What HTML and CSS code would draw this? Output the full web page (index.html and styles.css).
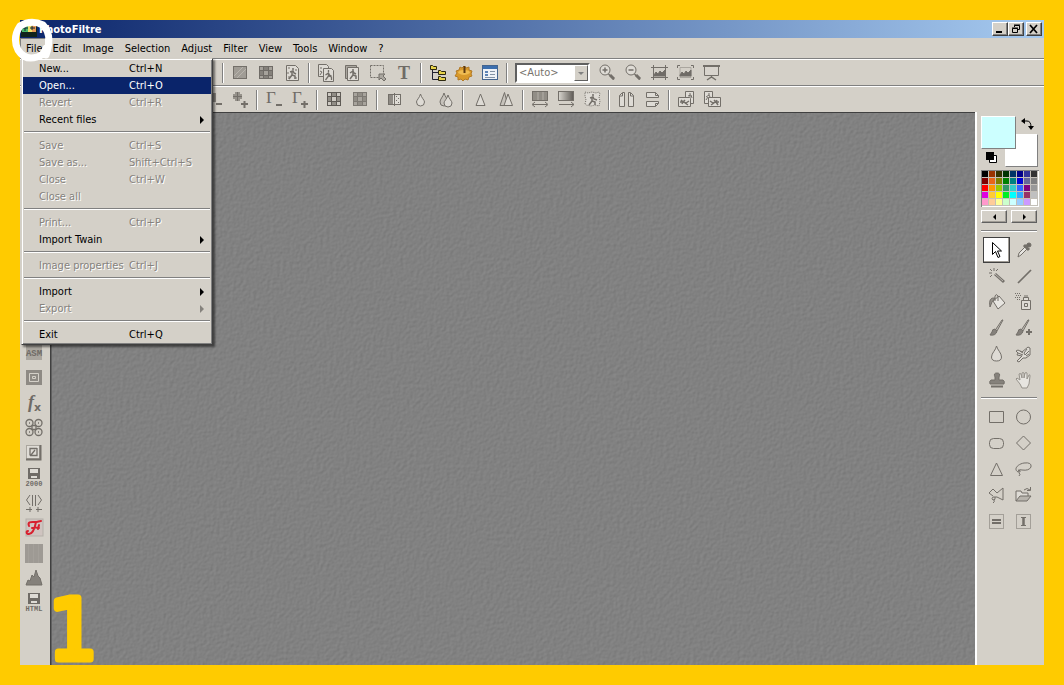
FILE: index.html
```html
<!DOCTYPE html>
<html lang="en">
<head>
<meta charset="utf-8">
<title>PhotoFiltre</title>
<link rel="stylesheet" href="styles.css">
</head>
<body>
<div class="window">
  <header class="titlebar">
    <svg class="app-icon" width="16" height="16" viewBox="0 0 16 16" aria-hidden="true"><rect width="16" height="16" fill="#10231c"/><path d="M1 3h6v8H1z" fill="#49b96d"/><path d="M7 3h4v8H7z" fill="#f0e06a"/><path d="M11 3h4v8h-4z" fill="#e99b58"/><path d="M2 7h5M4 5v5M9 7h5M11 5v4" stroke="#123" /></svg>
    <h1 class="title">PhotoFiltre</h1>
    <div class="win-controls">
      <button class="win-btn" aria-label="Minimize"><svg width="12" height="10"><path d="M2 8h6" stroke="#000" stroke-width="2"/></svg></button>
      <button class="win-btn" aria-label="Restore"><svg width="12" height="10" fill="none" stroke="#000"><path d="M4.500 3V1.500h5v4H8M4 1h6M2.500 4.500h5v4h-5zM2 4h6"/></svg></button>
      <button class="win-btn win-close" aria-label="Close"><svg width="12" height="10"><path d="M2 1l7 8M9 1L2 9" stroke="#000" stroke-width="1.700"/></svg></button>
    </div>
  </header>

  <nav class="menubar" aria-label="Main menu">
    <div class="menu-root">
      <button class="menu-title open" aria-expanded="true">File</button>
      <div class="dropdown" role="menu">
        <button class="item" role="menuitem"><span>New...</span><span>Ctrl+N</span></button>
        <button class="item selected" role="menuitem"><span>Open...</span><span>Ctrl+O</span></button>
        <button class="item" role="menuitem" disabled><span>Revert</span><span>Ctrl+R</span></button>
        <button class="item sub" role="menuitem"><span>Recent files</span></button>
        <hr class="menu-sep">
        <button class="item" role="menuitem" disabled><span>Save</span><span>Ctrl+S</span></button>
        <button class="item" role="menuitem" disabled><span>Save as...</span><span>Shift+Ctrl+S</span></button>
        <button class="item" role="menuitem" disabled><span>Close</span><span>Ctrl+W</span></button>
        <button class="item" role="menuitem" disabled><span>Close all</span></button>
        <hr class="menu-sep">
        <button class="item" role="menuitem" disabled><span>Print...</span><span>Ctrl+P</span></button>
        <button class="item sub" role="menuitem"><span>Import Twain</span></button>
        <hr class="menu-sep">
        <button class="item" role="menuitem" disabled><span>Image properties</span><span>Ctrl+J</span></button>
        <hr class="menu-sep">
        <button class="item sub" role="menuitem"><span>Import</span></button>
        <button class="item sub" role="menuitem" disabled><span>Export</span></button>
        <hr class="menu-sep">
        <button class="item" role="menuitem"><span>Exit</span><span>Ctrl+Q</span></button>
      </div>
    </div>
    <button class="menu-title">Edit</button>
    <button class="menu-title">Image</button>
    <button class="menu-title">Selection</button>
    <button class="menu-title">Adjust</button>
    <button class="menu-title">Filter</button>
    <button class="menu-title">View</button>
    <button class="menu-title">Tools</button>
    <button class="menu-title">Window</button>
    <button class="menu-title">?</button>
  </nav>

  <div class="toolbar main-tools" role="toolbar" aria-label="Standard">
    <i class="sep"></i>
    <button class="tool" aria-label="Grayscale"><svg class="ic" viewBox="0 0 20 20"><rect x="3.500" y="3.500" width="13" height="12" fill="#a09c95"/><path d="M4 13l9-9M7 15l9-9" stroke="#b8b4ad"/></svg></button>
    <button class="tool" aria-label="Indexed colors"><svg class="ic" viewBox="0 0 20 20"><rect x="3" y="3" width="14" height="13" fill="#6f6b66" stroke="none"/><path d="M4 4h3v3H4zM13 4h3v3h-3zM8 8h4v4H8zM4 13h3v2H4zM13 13h3v2h-3z" fill="#a6a29b" stroke="none"/><path d="M8 4h4v3H8zM4 8h3v4H4zM13 8h3v4h-3zM8 13h4v2H8z" fill="#85817b" stroke="none"/></svg></button>
    <button class="tool" aria-label="Transparency"><svg class="ic" viewBox="0 0 20 20"><path d="M4.500 2.500h9l3 3v12h-12z" fill="#dedbd5"/><path d="M6 4h2v2H6zM13 6h2v2h-2zM6 13h2v3H6zM13 14h2v2h-2zM5 9h2v2H5z" fill="#aaa69f" stroke="none"/><path d="M11 5v2M8 9l3-1 1 2 2 1M10 8v4l-3 4M10 12l3 1v3" stroke-width="1.500"/></svg></button>
    <i class="sep"></i>
    <button class="tool" aria-label="Duplicate"><svg class="ic" viewBox="0 0 20 20"><path d="M2.500 1.500h8l2 2v10h-10z" fill="#dedbd5"/><path d="M5 4v2M4 8l2 1-2 3"/><path d="M7.500 5.500h8l2 2v11h-10z" fill="#dedbd5"/><path d="M12.500 7v2M9.500 12l3-2 1 2 2 1M12.500 10v3l-3 4M12.500 13l3 1v3" stroke-width="1.300"/></svg></button>
    <button class="tool" aria-label="Paste as new"><svg class="ic" viewBox="0 0 20 20"><path d="M3.500 2.500h11v13h-11z" fill="#aaa69f"/><path d="M5.500 4.500h11v13h-11z" fill="#dedbd5"/><path d="M11 6v2M8 10l3-2 1 2 2 1M11 9v3l-3 4M11 12l3 1v3" stroke-width="1.500"/></svg></button>
    <button class="tool" aria-label="Show selection"><svg class="ic" viewBox="0 0 20 20"><rect x="2.500" y="2.500" width="13" height="12" stroke-dasharray="2 1"/><path d="M11 11h6l-2 2 3 3-2 2-3-3-2 2z" fill="#aaa69f"/></svg></button>
    <button class="tool" aria-label="Text"><svg class="ic" viewBox="0 0 20 20"><text x="10" y="16" text-anchor="middle" class="serif-glyph" font-size="18">T</text></svg></button>
    <i class="sep"></i>
    <button class="tool" aria-label="Image explorer"><svg class="ic" viewBox="0 0 20 20"><path d="M4.500 6v10.500H10M5 9.500h6" stroke="#223"/><path d="M2.500 2.500h2l1 1h3v3h-6zM10.500 7.500h2l1 1h4v3h-7zM10.500 13.500h2l1 1h4v3h-7z" fill="#e6d24a" stroke="#2c2810"/></svg></button>
    <button class="tool" aria-label="Automation"><svg class="ic" viewBox="0 0 20 20"><path d="M6 4l2 1 2-2 2 2 3-1v3l3 1-1 3 1 2-3 1-1 3-3-1-2 2-2-2-3 1v-3l-3-1 2-3-1-2 3-1z" fill="#d99a2b" stroke="#b37a26"/><path d="M4 10q0-3 6-3t6 3q-3 2-6 2t-6-2z" fill="#efbc52" stroke="none"/><path d="M10.500 3v7" stroke="#5d3a10" stroke-width="2"/></svg></button>
    <button class="tool" aria-label="Preferences"><svg class="ic" viewBox="0 0 20 20"><rect x="2.500" y="2.500" width="15" height="14" fill="#eef2f7" stroke="#44658f"/><path d="M3 3h14v3H3z" fill="#3c6faf" stroke="none"/><path d="M5 8h3v2H5zM5 11h3v2H5z" fill="#5c83b5" stroke="none"/><path d="M10 8.500h5M10 11.500h5M5 14.500h10" stroke="#8493a5"/></svg></button>
    <i class="sep"></i>
    <label class="zoom-select"><select aria-label="Zoom"><option>&lt;Auto&gt;</option></select><span class="drop" aria-hidden="true"></span></label>
    <button class="tool" aria-label="Zoom in"><svg class="ic" viewBox="0 0 20 20"><circle cx="8" cy="7" r="5" fill="#dedbd5"/><path d="M5.500 7h5M8 4.500v5M11.500 11l5.500 5.500" stroke-width="1.500"/><path d="M13 12l4 4" stroke-width="3"/></svg></button>
    <button class="tool" aria-label="Zoom out"><svg class="ic" viewBox="0 0 20 20"><circle cx="8" cy="7" r="5" fill="#dedbd5"/><path d="M5.500 7h5M11.500 11l5.500 5.500" stroke-width="1.500"/><path d="M13 12l4 4" stroke-width="3"/></svg></button>
    <button class="tool" aria-label="Fit image"><svg class="ic" viewBox="0 0 20 20"><path d="M4.500 2v15M16.500 2v15M2 4.500h17M2 14.500h17"/><path d="M5 12l2-3 2 2 2-3 2 2 3-3v6H5z" fill="#6f6b66"/></svg></button>
    <button class="tool" aria-label="Full size"><svg class="ic" viewBox="0 0 20 20"><path d="M5 4.500h11v10H5z" stroke="#aaa69f"/><path d="M5 12l2-3 2 2 2-3 2 2 3-3v6H5z" fill="#6f6b66"/><path d="M2.500 5V2.500H5M16 2.500h2.500V5M2.500 14v2.500H5M16 16.500h2.500V14"/></svg></button>
    <button class="tool" aria-label="Full screen"><svg class="ic" viewBox="0 0 20 20"><path d="M2 3h17" stroke-width="2"/><path d="M3.500 4v8.500h14V4" fill="#d8d4cd"/><path d="M10.500 13v2M6 17l4.500-3 4.500 3" stroke-width="1.500"/></svg></button>
  </div>

  <div class="toolbar adjust-tools" role="toolbar" aria-label="Adjust">
    <button class="tool" aria-label="Saturation minus"><svg class="ic" viewBox="0 0 20 20"><path d="M3 3h9v9H3z" fill="#8e8a84" stroke="none"/><path d="M12 14h6" stroke-width="2"/></svg></button>
    <button class="tool" aria-label="Saturation plus"><svg class="ic" viewBox="0 0 20 20"><path d="M5 2h5v9H5zM3 4h9v5H3z" fill="#96928b" stroke="none"/><path d="M7.500 2v9M3 6.500h9"/><path d="M11 14h7M14.500 11v7" stroke-width="2"/></svg></button>
    <i class="sep"></i>
    <button class="tool" aria-label="Gamma minus"><svg class="ic" viewBox="0 0 20 20"><text x="2" y="13" class="gamma-glyph" font-size="17">Γ</text><path d="M12 15h6" stroke-width="2"/></svg></button>
    <button class="tool" aria-label="Gamma plus"><svg class="ic" viewBox="0 0 20 20"><text x="2" y="13" class="gamma-glyph" font-size="17">Γ</text><path d="M11 14h7M14.500 11v7" stroke-width="2"/></svg></button>
    <i class="sep"></i>
    <button class="tool" aria-label="Increase contrast"><svg class="ic" viewBox="0 0 20 20"><rect x="3" y="2" width="14" height="14" fill="#5f5b56" stroke="none"/><path d="M4 3h3v3H4zM13 3h3v3h-3zM8 7h4v4H8zM4 12h3v3H4zM13 12h3v3h-3z" fill="#cdc9c2" stroke="none"/><path d="M8 3h4v3H8zM4 7h3v4H4zM13 7h3v4h-3zM8 12h4v3H8z" fill="#918d86" stroke="none"/></svg></button>
    <button class="tool" aria-label="Reduce contrast"><svg class="ic" viewBox="0 0 20 20"><rect x="3" y="2" width="14" height="14" fill="#7d7973" stroke="none"/><path d="M4 3h3v3H4zM13 3h3v3h-3zM8 7h4v4H8zM4 12h3v3H4zM13 12h3v3h-3z" fill="#a8a49d" stroke="none"/><path d="M8 3h4v3H8zM4 7h3v4H4zM13 7h3v4h-3zM8 12h4v3H8z" fill="#918d86" stroke="none"/></svg></button>
    <i class="sep"></i>
    <button class="tool" aria-label="Black and white"><svg class="ic" viewBox="0 0 20 20"><rect x="4.500" y="4.500" width="12" height="10" fill="#dedbd5"/><path d="M5 5h4v9H5z" fill="#8e8a84" stroke="none"/><path d="M10.500 3v13M12 6.500h1M14 8.500h1M12 10.500h1M14 12.500h1"/></svg></button>
    <button class="tool" aria-label="Soften"><svg class="ic" viewBox="0 0 20 20"><path d="M10.500 4c-1 4-4 6-4 8a4 4 0 0 0 8 0c0-2-3-4-4-8z" fill="#dedbd5"/></svg></button>
    <button class="tool" aria-label="Blur"><svg class="ic" viewBox="0 0 20 20"><path d="M8 3C7 7 4 9 4 12a4 4 0 0 0 8 0c0-3-3-5-4-9z" fill="#c6c2bb"/><path d="M12 5c-1 4-4 6-4 8a4 4 0 0 0 8 0c0-2-3-4-4-8z" fill="#dedbd5"/></svg></button>
    <i class="sep"></i>
    <button class="tool" aria-label="Sharpen"><svg class="ic" viewBox="0 0 20 20"><path d="M10.500 4l-4.500 11.500h9z" fill="#dedbd5"/></svg></button>
    <button class="tool" aria-label="Sharpen more"><svg class="ic" viewBox="0 0 20 20"><path d="M8.500 2.500L4 15.500h8z" fill="#c6c2bb"/><path d="M12 4L8 15.500h8.500z" fill="#dedbd5"/></svg></button>
    <i class="sep"></i>
    <button class="tool" aria-label="Image size"><svg class="ic" viewBox="0 0 20 20"><rect x="2.500" y="1.500" width="15" height="9" fill="#918d86"/><path d="M8 2v8M13 2v8" stroke="#b4b0a9"/><path d="M3 14.500h14M5 12l-3 2.500L5 17M15 12l3 2.500-3 2.500"/></svg></button>
    <button class="tool" aria-label="Gradient"><svg class="ic" viewBox="0 0 20 20"><defs><linearGradient id="fade"><stop stop-color="#d9d6cf"/><stop offset="1" stop-color="#5f5b56"/></linearGradient></defs><rect x="2.500" y="1.500" width="15" height="9" fill="url(#fade)"/><path d="M3 14.500h15M15 12l3 2.500-3 2.500"/></svg></button>
    <button class="tool" aria-label="Cutout"><svg class="ic" viewBox="0 0 20 20"><path d="M3 2l3 1 4-1 4 1 3-1 1 2-1 3 1 4-1 5-4-1-4 1-5-1-1-1 1-4-1-4z" fill="#dedbd5" stroke-dasharray="1 1"/><path d="M11 4v2M8 8l3-1 1 2 3 1M10 7v4l-3 4M10 11l3 1v3" stroke-width="1.500"/></svg></button>
    <i class="sep"></i>
    <button class="tool" aria-label="Flip horizontally"><svg class="ic" viewBox="0 0 20 20"><path d="M8.500 2.500v14h-5v-11l3-3zM12.500 2.500v14h5v-11l-3-3z" fill="#dedbd5"/><path d="M6.500 3v3h-3M14.500 3v3h3"/></svg></button>
    <button class="tool" aria-label="Flip vertically"><svg class="ic" viewBox="0 0 20 20"><path d="M4.500 7.500v-5h9l3 3v2zM4.500 11.500v5h9l3-3v-2z" fill="#dedbd5"/><path d="M13.500 2.500v3h3M13.500 16.500v-3h3"/></svg></button>
    <i class="sep"></i>
    <button class="tool" aria-label="Rotate left"><svg class="ic" viewBox="0 0 20 20"><path d="M9.500 1.500h8v12h-8z" fill="#dedbd5"/><path d="M14 3v2M12 6l3-1 1 3M14 6v2"/><path d="M2.500 7.500h11l1 1v8h-12z" fill="#dedbd5"/><path d="M4 12h3l2-2M7 12l3 1 3-2M9 13l3 2M5 10l2 2-1 2" stroke-width="1.500"/></svg></button>
    <button class="tool" aria-label="Rotate right"><svg class="ic" viewBox="0 0 20 20"><path d="M2.500 1.500h8v12h-8z" fill="#dedbd5"/><path d="M7 3v2M4 7l3-2 1 2M6 7l-2 3"/><path d="M6.500 7.500h12v9h-12z" fill="#dedbd5"/><path d="M17 12h-3l-2-2M14 12l-3 1-3-2M12 13l-3 2M15 10l-1 2 2 3" stroke-width="1.500"/></svg></button>
  </div>

  <main class="workspace">
    <aside class="effects" aria-label="Effects">
      <button class="tool" aria-label="ASM"><svg class="ic" viewBox="0 0 20 20"><rect x="2" y="1" width="16" height="16" fill="#aaa69f" stroke="none"/><text x="10" y="13" text-anchor="middle" class="pixel-glyph" font-size="9">ASM</text></svg></button>
      <button class="tool" aria-label="Frame"><svg class="ic" viewBox="0 0 20 20"><rect x="2" y="2" width="16" height="15" fill="#8e8a84" stroke="none"/><path d="M5.500 5.500h9v8h-9zM8.500 8.500h3v2h-3z" stroke="#d4d0c8"/></svg></button>
      <button class="tool" aria-label="Function"><svg class="ic" viewBox="0 0 20 20"><text x="4" y="15" class="script-glyph" font-size="18">f</text><text x="10" y="18" class="bold-glyph" font-size="11">x</text></svg></button>
      <button class="tool" aria-label="Pattern"><svg class="ic" viewBox="0 0 20 20"><g stroke-width="1.300"><circle cx="5.500" cy="5" r="3.500"/><circle cx="14.500" cy="5" r="3.500"/><circle cx="5.500" cy="14" r="3.500"/><circle cx="14.500" cy="14" r="3.500"/><path d="M5 5h1M14 5h1M5 14h1M14 14h1M8 7.500h4v4H8z"/></g></svg></button>
      <button class="tool" aria-label="Bevel"><svg class="ic" viewBox="0 0 20 20"><rect x="2.500" y="2.500" width="13" height="13" fill="#dedbd5" stroke="#aaa69f"/><path d="M2 16.500h14.500V2" stroke-width="2"/><path d="M6 12.500V5.500h7M6 12.500h7V5M7 12l4-5" stroke-width="1.300"/></svg></button>
      <button class="tool" aria-label="Export 2000"><svg class="ic" viewBox="0 0 20 20"><path d="M4 0h12v11H4z" fill="#6f6b66" stroke="none"/><path d="M6 1h8v4H6zM7 8h6v2H7z" fill="#dedbd5" stroke="none"/><text x="10" y="18" text-anchor="middle" class="pixel-glyph" font-size="7">2000</text></svg></button>
      <button class="tool" aria-label="Symmetry"><svg class="ic" viewBox="0 0 20 20"><path d="M6 2L2.500 7l3.500 5M14 2l3.500 5-3.500 5M8.500 2v11M11.500 2v11M2 16.500h6M6 14v5M18 16.500h-6M14 14v5"/></svg></button>
      <button class="tool" aria-label="Fantasy"><svg class="ic" viewBox="0 0 20 20"><rect x="2" y="1" width="17" height="17" fill="#cfc4c0" stroke="#b4b0a9"/><path d="M5 8C3 3 8 4 11 4s4-1 6-1M12 4C11 9 9 16 5 16c-3 0-3-3-1-3M8 10q4-1 7 0M15 7l-1 4" stroke="#d8202e" stroke-width="2" stroke-linecap="round"/></svg></button>
      <button class="tool" aria-label="Texture"><svg class="ic" viewBox="0 0 20 20"><rect x="1" y="1" width="18" height="19" fill="#9e9a94" stroke="none"/><path d="M4.500 1v19M9.500 1v19M14.500 1v19" stroke="#a4a09a"/></svg></button>
      <button class="tool" aria-label="Histogram"><svg class="ic" viewBox="0 0 20 20"><path d="M2 17l2-5 2 1 2-6 2 2 2-7 2 6 2 2 2 7z" fill="#85817b"/></svg></button>
      <button class="tool" aria-label="Export HTML"><svg class="ic" viewBox="0 0 20 20"><path d="M4 0h12v11H4z" fill="#6f6b66" stroke="none"/><path d="M6 1h8v4H6zM7 8h6v2H7z" fill="#dedbd5" stroke="none"/><text x="10" y="18" text-anchor="middle" class="pixel-glyph" font-size="7">HTML</text></svg></button>
    </aside>

    <section class="canvas" aria-label="Workspace">
      <svg class="texture" width="100%" height="100%" aria-hidden="true">
        <filter id="grain" x="0" y="0" width="100%" height="100%" color-interpolation-filters="sRGB">
          <feTurbulence type="fractalNoise" baseFrequency="0.3" numOctaves="2" seed="4"/>
          <feDiffuseLighting surfaceScale="0.25" diffuseConstant="1" lighting-color="#959595"><feDistantLight azimuth="225" elevation="60"/></feDiffuseLighting>
        </filter>
        <rect width="100%" height="100%" filter="url(#grain)"/>
      </svg>
    </section>

    <aside class="palette" aria-label="Colors and tools">
      <div class="swatches">
        <button class="swatch back" aria-label="Background color"></button>
        <button class="swatch fore" aria-label="Foreground color"></button>
        <button class="swap" aria-label="Swap colors"><svg width="14" height="14" viewBox="0 0 14 14"><path d="M3 4h3q4 0 4 6" fill="none" stroke="#000"/><path d="M0 4l4-3v6zM7 9h6l-3 4z"/></svg></button>
        <button class="reset" aria-label="Default colors"><svg width="11" height="11" viewBox="0 0 11 11"><path d="M3.500 3.500h7v7h-7z" fill="#fff" stroke="#000"/><path d="M0 0h8v8H0z"/></svg></button>
      </div>
      <div class="colors">
        <i class="c000"></i><i class="c930"></i><i class="c330"></i><i class="c030"></i><i class="c036"></i><i class="c008"></i><i class="c339"></i><i class="c333"></i>
        <i class="c800"></i><i class="cf60"></i><i class="c880"></i><i class="c080"></i><i class="c088"></i><i class="c00f"></i><i class="c669"></i><i class="c888"></i>
        <i class="cf00"></i><i class="cf90"></i><i class="c9c0"></i><i class="c396"></i><i class="c3cc"></i><i class="c36f"></i><i class="c808"></i><i class="c999"></i>
        <i class="cf0f"></i><i class="cfc0"></i><i class="cff0"></i><i class="c0f0"></i><i class="c0ff"></i><i class="c0cf"></i><i class="c936"></i><i class="cccc"></i>
        <i class="cf9c"></i><i class="cfc9"></i><i class="cff9"></i><i class="ccfc"></i><i class="ccff"></i><i class="c9cf"></i><i class="cc9f"></i><i class="cfff"></i>
      </div>
      <div class="pager">
        <button class="page-btn" aria-label="Previous palette"><svg width="7" height="7"><path d="M5 1v6L2 4z"/></svg></button>
        <button class="page-btn" aria-label="Next palette"><svg width="7" height="7"><path d="M2 1v6l3-3z"/></svg></button>
      </div>
      <hr class="rule">
      <div class="tool-grid">
        <button class="tool active" aria-label="Selection"><svg class="ic" viewBox="0 0 20 20"><path d="M5.500 2.500v12l3-3 2.500 6 2-1-2.500-5.500h4z" fill="#fff" stroke="#000"/></svg></button>
        <button class="tool" aria-label="Pipette"><svg class="ic" viewBox="0 0 20 20"><path d="M4 17l1-4 6-6 2 2-6 6z" fill="#e7e5e0"/><path d="M10 5l5 5M12 7l3-3" stroke-width="3"/><circle cx="15" cy="5" r="2" fill="#6f6b66"/></svg></button>
        <button class="tool" aria-label="Magic wand"><svg class="ic" viewBox="0 0 20 20"><path d="M8 8l9 8" stroke-width="3"/><path d="M8 8l8 7" stroke="#bbb7b0"/><path d="M7 2v3M2 7h3M3 3l2 2M11 3L9 5M3 11l2-2"/></svg></button>
        <button class="tool" aria-label="Line"><svg class="ic" viewBox="0 0 20 20"><path d="M4 17L17 4" stroke-width="1.700"/></svg></button>
        <button class="tool" aria-label="Fill"><svg class="ic" viewBox="0 0 20 20"><path d="M6 9l6-5 6 7-7 6z" fill="#e7e5e0"/><path d="M8 9V4q1-3 3 0v5"/><path d="M8 6Q1 5 3 15l2-5z" fill="#96928b"/></svg></button>
        <button class="tool" aria-label="Spray"><svg class="ic" viewBox="0 0 20 20"><path d="M7.500 8.500h9v9h-9zM9.500 8V5.500h5V8" fill="#dedbd5"/><path d="M10.500 11.500h3v3h-3zM10 4h4"/><path d="M1 1.500h6M2 3.500h6M1 5.500h6M3 7.500h3" stroke-dasharray="1 1"/></svg></button>
        <button class="tool" aria-label="Brush"><svg class="ic" viewBox="0 0 20 20"><path d="M15 2l-6 9-1 2 2 0 6-11z" fill="#c6c2bb"/><path d="M8 11q-3 0-3 3l-2 3q6 1 7-4z" fill="#85817b"/></svg></button>
        <button class="tool" aria-label="Advanced brush"><svg class="ic" viewBox="0 0 20 20"><path d="M14 2l-6 9-1 2 2 0 6-11z" fill="#c6c2bb"/><path d="M7 11q-3 0-3 3l-2 3q6 1 7-4z" fill="#85817b"/><path d="M12 14h6M15 11v6" stroke-width="2"/></svg></button>
        <button class="tool" aria-label="Blur tool"><svg class="ic" viewBox="0 0 20 20"><path d="M9.500 2C9 6 4.500 9 4.500 13q0 4 5 4 5 0 5-4c0-4-4-7-5-11z" fill="#dedbd5"/></svg></button>
        <button class="tool" aria-label="Smudge"><svg class="ic" viewBox="0 0 20 20"><path d="M3 17l5-5-5-1 1-2-2-2 2-1 4 2 6-5 2 1v7l-4 3H9l-4 4z" fill="#dedbd5"/><path d="M4 9l5 2M6 7l3 2M13 5l-3 4 1 2 4-4M15 10l-3 2"/></svg></button>
        <button class="tool" aria-label="Clone stamp"><svg class="ic" viewBox="0 0 20 20"><path d="M8 10V7q-2-4 2-4t2 4v3h4q2 1 1 4H3q-1-3 1-4z" fill="#85817b"/><path d="M4 16.500h12" stroke-width="2"/></svg></button>
        <button class="tool" aria-label="Pan"><svg class="ic" viewBox="0 0 20 20"><path d="M6 14l-4-5 1-1 3 2-1-6q1-1 2 0l1 4V3q1-1 2 0v5l1-5q1-1 2 0v6l2-4q1-1 1 1l-1 8-2 4H8z" fill="#e7e5e0" stroke="#96928b"/></svg></button>
      </div>
      <hr class="rule shape-rule">
      <div class="tool-grid">
        <button class="tool" aria-label="Rectangle"><svg class="ic" viewBox="0 0 20 20"><path d="M2.500 4.500h14v11h-14z"/></svg></button>
        <button class="tool" aria-label="Ellipse"><svg class="ic" viewBox="0 0 20 20"><circle cx="9.500" cy="10" r="7"/></svg></button>
        <button class="tool" aria-label="Rounded rectangle"><svg class="ic" viewBox="0 0 20 20"><rect x="2.500" y="5.500" width="14" height="10" rx="4"/></svg></button>
        <button class="tool" aria-label="Rhombus"><svg class="ic" viewBox="0 0 20 20"><path d="M9.500 3l7 7-7 7-7-7z"/></svg></button>
        <button class="tool" aria-label="Triangle"><svg class="ic" viewBox="0 0 20 20"><path d="M9.500 4L3.500 16.500h12z"/></svg></button>
        <button class="tool" aria-label="Lasso"><svg class="ic" viewBox="0 0 20 20"><path d="M4 13C-1 10 4 5 10 4q8-1 7 4-2 4-9 3-2-1-4 1 0 2 2 1 1-2-2-2m1 3q2 1 0 3"/></svg></button>
        <button class="tool" aria-label="Polygon"><svg class="ic" viewBox="0 0 20 20"><path d="M6 11L2 8l4-4 4 4 6-5v12l-6-3H6q-2 2 0 3 3 0 2-3m-1 3q1 2-1 3"/></svg></button>
        <button class="tool" aria-label="Load selection"><svg class="ic" viewBox="0 0 20 20"><path d="M2 16V6h5l1 2h6v3" fill="#dedbd5"/><path d="M2 16l4-5h11l-4 5z" fill="#b8b4ad"/><path d="M10 5q3-3 6 0M16.500 2v3.500H13"/></svg></button>
        <button class="tool" aria-label="Save selection"><svg class="ic" viewBox="0 0 20 20"><rect x="2.500" y="3.500" width="14" height="14" stroke-dasharray="1 1"/><path d="M5 9h9M5 12h9" stroke-width="2"/></svg></button>
        <button class="tool" aria-label="Edit selection"><svg class="ic" viewBox="0 0 20 20"><rect x="2.500" y="3.500" width="14" height="14" stroke-dasharray="1 1"/><path d="M7 6.500h5M7 14.500h5"/><path d="M9.500 6v8" stroke-width="2.500"/></svg></button>
      </div>
    </aside>
  </main>
</div>

<svg class="ring" width="44" height="48" viewBox="0 0 44 48" aria-hidden="true"><path d="M36 38Q43 18 33 8 21 2 10 9 2 21 8 33 15 44 27 40 34 38 36 31" fill="none" stroke="#fff" stroke-width="7" stroke-linecap="round" stroke-linejoin="round"/></svg>
<svg class="step" width="50" height="80" viewBox="0 0 50 80"><text x="0" y="69">1</text></svg>
</body>
</html>
```

FILE: styles.css
```css
* { box-sizing: border-box; }

body {
  margin: 0;
  padding: 20px;
  height: 100vh;
  overflow: hidden;
  background: #ffcb00;
  font: 11px/13px Tahoma, "DejaVu Sans Condensed", "DejaVu Sans", sans-serif;
  color: #000;
}

button {
  font: inherit;
  color: inherit;
  margin: 0;
  padding: 0;
  border: 0;
  background: none;
}

.window {
  display: flex;
  flex-direction: column;
  height: 100%;
  background: #d4d0c8;
}

/* Title bar */
.titlebar {
  display: flex;
  align-items: center;
  height: 18px;
  padding: 0 2px 0 1px;
  gap: 2px;
  background: linear-gradient(to right, #0a246a, #a6caf0);
  flex: none;
}
.title { flex: 1; margin: 0; font-size: 11px; line-height: 13px; font-weight: bold; color: #fff; }
.win-controls { display: flex; }
.win-btn {
  display: flex;
  width: 16px;
  height: 14px;
  padding: 1px;
  background: #d4d0c8;
  border: 1px solid;
  border-color: #fff #404040 #404040 #fff;
  box-shadow: inset -1px -1px #808080;
}
.win-close { margin-left: 2px; }

/* Menu bar */
.menubar {
  display: flex;
  height: 21px;
  border-bottom: 1px solid #808080;
  flex: none;
}
.menu-root { position: relative; display: flex; }
.menu-title { padding: 0 5px 0 6px; }
.menu-title.open { border: 1px solid; border-color: #808080 #fff #fff #808080; padding: 0 3px 0 5px; }

.dropdown {
  position: absolute;
  z-index: 5;
  top: 20px;
  left: 1px;
  width: 192px;
  padding: 1px;
  background: #d4d0c8;
  border: 1px solid;
  border-color: #d4d0c8 #404040 #404040 #d4d0c8;
  box-shadow: inset 1px 1px #fff, inset -1px -1px #808080, 2px 2px 2px rgba(0, 0, 0, 0.5);
}
.item {
  display: grid;
  grid-template-columns: 90px 1fr 11px;
  align-items: center;
  width: 100%;
  height: 17px;
  padding-left: 16px;
  text-align: left;
  white-space: nowrap;
}
.item:disabled { color: #85827d; text-shadow: 1px 1px #fff; }
.item.selected { background: #0a246a; color: #fff; }
.item.sub::after {
  content: "";
  grid-column: 3;
  border: 4px solid transparent;
  border-left-color: currentColor;
  border-right: 0;
  width: 4px;
}
.menu-sep {
  height: 2px;
  margin: 3px 1px 4px;
  border: 0;
  border-top: 1px solid #808080;
  border-bottom: 1px solid #fff;
}

/* Toolbars */
.toolbar {
  display: flex;
  align-items: center;
  height: 27px;
  border-top: 1px solid #fff;
  flex: none;
}
.main-tools { border-bottom: 1px solid #808080; padding-left: 199px; }
.adjust-tools { height: 26px; padding-left: 181px; }
.tool {
  display: flex;
  align-items: center;
  justify-content: center;
  width: 26px;
  height: 25px;
  flex: none;
}
.ic { width: 20px; height: 20px; fill: none; stroke: #736f69; overflow: visible; }
.sep {
  width: 2px;
  height: 20px;
  margin: 0 3px;
  border-left: 1px solid #808080;
  border-right: 1px solid #fff;
  flex: none;
}
.serif-glyph, .gamma-glyph, .script-glyph, .bold-glyph, .pixel-glyph { fill: #6f6b66; stroke: none; }
.serif-glyph { font-family: "Liberation Serif", serif; font-weight: bold; }
.gamma-glyph { font-family: "Liberation Serif", serif; }
.script-glyph { font-family: "Liberation Serif", serif; font-style: italic; font-weight: bold; }
.bold-glyph { font-family: "DejaVu Sans", sans-serif; font-weight: bold; }
.pixel-glyph { font-family: "Liberation Mono", monospace; font-weight: bold; }

.zoom-select { position: relative; display: flex; width: 75px; height: 20px; margin: 0 4px; }
.zoom-select select {
  appearance: none;
  width: 100%;
  padding: 0 2px;
  font: inherit;
  color: #77736d;
  background: #fff;
  border: 2px solid;
  border-color: #606060 #fff #fff #606060;
  border-radius: 0;
}
.drop {
  position: absolute;
  top: 2px;
  right: 2px;
  width: 14px;
  height: 16px;
  background: #d4d0c8;
  border: 1px solid;
  border-color: #fff #606060 #606060 #fff;
  pointer-events: none;
}
.drop::after {
  content: "";
  display: block;
  margin: 6px auto 0;
  width: 0;
  border: 3px solid transparent;
  border-top-color: #808080;
  border-bottom: 0;
}

/* Work area */
.workspace { display: flex; flex: 1; min-height: 0; }
.effects {
  display: flex;
  flex-direction: column;
  width: 31px;
  padding: 228px 4px 0 1px;
  border-right: 1px solid #404040;
  overflow: hidden;
  flex: none;
}
.canvas {
  flex: 1;
  min-width: 0;
  overflow: hidden;
  background: #808080;
  border-top: 1px solid #404040;
  border-left: 1px solid #606060;
}
.texture { display: block; }

/* Right palette */
.palette {
  width: 69px;
  padding: 4px 7px 0 4px;
  border-left: 2px solid #fff;
  flex: none;
}
.swatches { position: relative; height: 54px; }
.swatch { position: absolute; border: 1px solid; border-color: #fff #808080 #808080 #fff; }
.fore { top: 0; left: 0; width: 35px; height: 33px; background: #cff; }
.back { top: 18px; left: 24px; width: 33px; height: 33px; background: #fff; }
.swap { position: absolute; top: 1px; left: 40px; width: 14px; height: 14px; }
.reset { position: absolute; top: 36px; left: 5px; width: 11px; height: 11px; }
.swap svg, .reset svg { display: block; }
.colors {
  display: grid;
  grid-template-columns: repeat(8, 7px);
  grid-auto-rows: 7px;
  width: 58px;
  padding: 1px;
  background: #d4d0c8;
  box-shadow: inset 1px 1px #808080, inset -1px -1px #fff;
}
.colors i { border: 1px solid #c4c0b8; border-width: 0 1px 1px 0; }
.c000 { background: #000; } .c930 { background: #930; } .c330 { background: #330; } .c030 { background: #030; }
.c036 { background: #036; } .c008 { background: #008; } .c339 { background: #339; } .c333 { background: #333; }
.c800 { background: #800000; } .cf60 { background: #e8661a; } .c880 { background: #808000; } .c080 { background: #008000; }
.c088 { background: #008080; } .c00f { background: #0000d8; } .c669 { background: #669; } .c888 { background: #808080; }
.cf00 { background: #f00; } .cf90 { background: #f90; } .c9c0 { background: #9c0; } .c396 { background: #396; }
.c3cc { background: #3cc; } .c36f { background: #36f; } .c808 { background: #800080; } .c999 { background: #999; }
.cf0f { background: #e000e0; } .cfc0 { background: #fc3; } .cff0 { background: #ff0; } .c0f0 { background: #0e2; }
.c0ff { background: #0ff; } .c0cf { background: #3af; } .c936 { background: #936; } .cccc { background: #c0c0c0; }
.cf9c { background: #f9c; } .cfc9 { background: #fc9; } .cff9 { background: #ff9; } .ccfc { background: #cfc; }
.ccff { background: #cff; } .c9cf { background: #9cf; } .cc9f { background: #c9f; } .cfff { background: #fff; }
.pager { display: flex; gap: 4px; margin-top: 3px; }
.page-btn {
  display: flex;
  align-items: center;
  justify-content: center;
  width: 27px;
  height: 13px;
  border: 1px solid;
  border-color: #fff #606060 #606060 #fff;
  box-shadow: inset -1px -1px #a09c95;
}
.rule {
  height: 2px;
  margin: 7px 0 5px;
  border: 0;
  border-top: 1px solid #808080;
  border-bottom: 1px solid #fff;
}
.shape-rule { margin: 4px 0 5px; }
.tool-grid { display: grid; grid-template-columns: repeat(2, 27px); grid-auto-rows: 26px; padding-left: 2px; }
.tool-grid .tool { width: 27px; height: 26px; }
.tool-grid .active { background: #fff; border: 1px solid #404040; box-shadow: inset -1px -1px #a09c95; }

/* Hand-drawn annotations */
.ring { position: absolute; z-index: 10; top: 17px; left: 10px; }
.step { position: absolute; z-index: 10; left: 49px; top: 590px; overflow: visible; }
.step text {
  font: 84px "DejaVu Sans Condensed", "DejaVu Sans", sans-serif;
  fill: #ffcb00;
  stroke: #ffcb00;
  stroke-width: 7px;
  stroke-linejoin: round;
}
```
